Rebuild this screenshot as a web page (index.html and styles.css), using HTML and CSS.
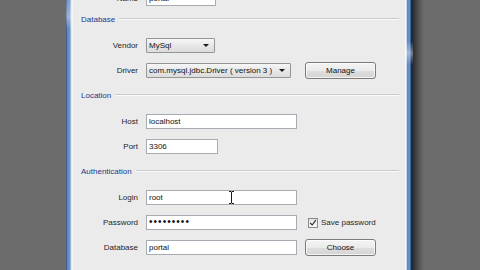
FILE: index.html
```html
<!DOCTYPE html>
<html>
<head>
<meta charset="utf-8">
<link rel="stylesheet" href="styles.css">
</head>
<body>
<div class="desktop">
  <div class="window">
    <div class="frame-l"></div>
    <div class="content">
      <div class="row row-first"><span class="lbl">Name</span><div class="field w-name">portal</div></div>

      <div class="section"><span class="sec-title">Database</span><i class="rule"></i></div>
      <div class="row"><span class="lbl">Vendor</span><div class="select w-vendor"><span class="val">MySql</span><b class="arrow"></b></div></div>
      <div class="row"><span class="lbl">Driver</span><div class="select w-driver"><span class="val">com.mysql.jdbc.Driver ( version 3 )</span><b class="arrow"></b></div><div class="btn btn-manage">Manage</div></div>

      <div class="section"><span class="sec-title">Location</span><i class="rule"></i></div>
      <div class="row"><span class="lbl">Host</span><div class="field w-long">localhost</div></div>
      <div class="row"><span class="lbl">Port</span><div class="field w-port">3306</div></div>

      <div class="section"><span class="sec-title">Authentication</span><i class="rule"></i></div>
      <div class="row"><span class="lbl">Login</span><div class="field w-long">root</div></div>
      <div class="row"><span class="lbl">Password</span><div class="field w-long dots">•••••••••</div><div class="check"><svg viewBox="0 0 10 10" width="8" height="8"><path d="M1.5 5 L4 7.5 L8.5 1.5" fill="none" stroke="#2a2a2a" stroke-width="1.4"/></svg></div><span class="check-lbl">Save password</span></div>
      <div class="row"><span class="lbl">Database</span><div class="field w-long">portal</div><div class="btn btn-choose">Choose</div></div>
    </div>
    <div class="frame-r"></div>
  </div>
  <svg class="ibeam" viewBox="0 0 7 13" width="7" height="13"><path d="M1 0.5 H3 L3.5 1 L4 0.5 H6 M3.5 1 V12 M1 12.5 H3 L3.5 12 L4 12.5 H6" fill="none" stroke="#1a1a1a" stroke-width="1"/></svg>
</div>
</body>
</html>
```

FILE: styles.css
```css
* { box-sizing: border-box; }
html, body { margin: 0; padding: 0; }
body {
  width: 480px;
  height: 270px;
  overflow: hidden;
  background: #6c6c6c;
  font-family: "Liberation Sans", Arial, sans-serif;
  font-size: 8px;
  color: #1c1c1c;
}
.desktop {
  position: relative;
  width: 480px;
  height: 270px;
  overflow: hidden;
  background: #6c6c6c;
}
.window {
  position: absolute;
  left: 66px;
  top: -11px;
  width: 347px;
  height: 300px;
  display: flex;
}
.window::after {
  content: "";
  position: absolute;
  left: 347px;
  top: 0;
  width: 11px;
  height: 100%;
  background: linear-gradient(to right, #2c2c2c, #4e4e4e 45%, #6c6c6c);
}
.frame-l {
  width: 7px;
  flex: none;
  background:
    linear-gradient(to bottom, rgba(255,255,255,0) 0, rgba(255,255,255,0.35) 28px, rgba(255,255,255,0) 40px, rgba(255,255,255,0) 100%),
    linear-gradient(to right, #3f5f8e 0, #3f5f8e 1px, #5f88c0 1px, #6b93c9 4px, #9fb9dc 4px, #9fb9dc 5px, #dfe7f1 5px, #dfe7f1 6px, #f4f4f4 6px);
}
.frame-r {
  width: 8px;
  flex: none;
  background:
    linear-gradient(to bottom, rgba(255,255,255,0) 0, rgba(255,255,255,0) 52px, rgba(255,255,255,0.4) 64px, rgba(255,255,255,0) 76px, rgba(255,255,255,0) 100%),
    linear-gradient(to right, #f7f7f7 0, #f7f7f7 1px, #c9d7ea 1px, #c9d7ea 2px, #5a87c3 2px, #6a93c9 5px, #3d6297 5px, #3d6297 6px, #1e2a3a 6px);
}
.content {
  width: 332px;
  flex: none;
  background: #ebebeb;
  display: flex;
  flex-direction: column;
}
.row {
  height: 25px;
  display: flex;
  align-items: center;
  flex: none;
}
.row-first { height: 18px; }
.lbl {
  width: 65px;
  margin-right: 8px;
  text-align: right;
  color: #1f1f1f;
  flex: none;
}
.section {
  height: 26px;
  padding: 0 6px 2px 8px;
  display: flex;
  align-items: center;
  flex: none;
}
.sec-title {
  color: #22398a;
}
.rule {
  flex: 1;
  margin-left: 4px;
  height: 2px;
  border-top: 1px solid #cbcbcb;
  border-bottom: 1px solid #fafafa;
}
.field {
  height: 15px;
  border: 1px solid #a7acb3;
  background: #fff;
  padding: 0 2px;
  line-height: 13px;
  color: #111;
  flex: none;
  white-space: nowrap;
  overflow: hidden;
}
.dots {
  font-size: 10px;
  letter-spacing: 1.05px;
  line-height: 12px;
  padding-left: 2px;
}
.w-name { width: 70px; }
.w-port { width: 72px; }
.w-long { width: 151px; }
.select {
  height: 15px;
  border: 1px solid #959595;
  border-radius: 1px;
  background: linear-gradient(to bottom, #f6f6f6, #e6e6e6 55%, #dcdcdc);
  display: flex;
  align-items: center;
  padding: 0 5px 0 2px;
  flex: none;
  color: #111;
  white-space: nowrap;
}
.select .val { flex: 1; overflow: hidden; }
.w-vendor { width: 69px; }
.w-driver { width: 145px; }
.arrow {
  width: 0;
  height: 0;
  border-left: 3px solid transparent;
  border-right: 3px solid transparent;
  border-top: 3px solid #1a1a1a;
  margin-left: 3px;
}
.btn {
  width: 71px;
  height: 17px;
  border: 1px solid #7b7b7b;
  border-radius: 3px;
  background: linear-gradient(to bottom, #f4f4f4 0, #ebebeb 50%, #dedede 51%, #d4d4d4 100%);
  box-shadow: inset 0 0 0 1px rgba(255,255,255,0.7);
  text-align: center;
  line-height: 15px;
  color: #111;
  flex: none;
}
.btn-manage { margin-left: 14px; }
.btn-choose { margin-left: 8px; }
.check {
  width: 10px;
  height: 10px;
  margin-left: 11px;
  border: 1px solid #8a8a8a;
  background: linear-gradient(to bottom, #e2e2e2, #fbfbfb);
  display: flex;
  align-items: center;
  justify-content: center;
  flex: none;
}
.check svg { display: block; }
.check-lbl {
  margin-left: 3px;
  color: #1f1f1f;
  white-space: nowrap;
}
.ibeam {
  position: absolute;
  left: 228px;
  top: 191px;
}
```
